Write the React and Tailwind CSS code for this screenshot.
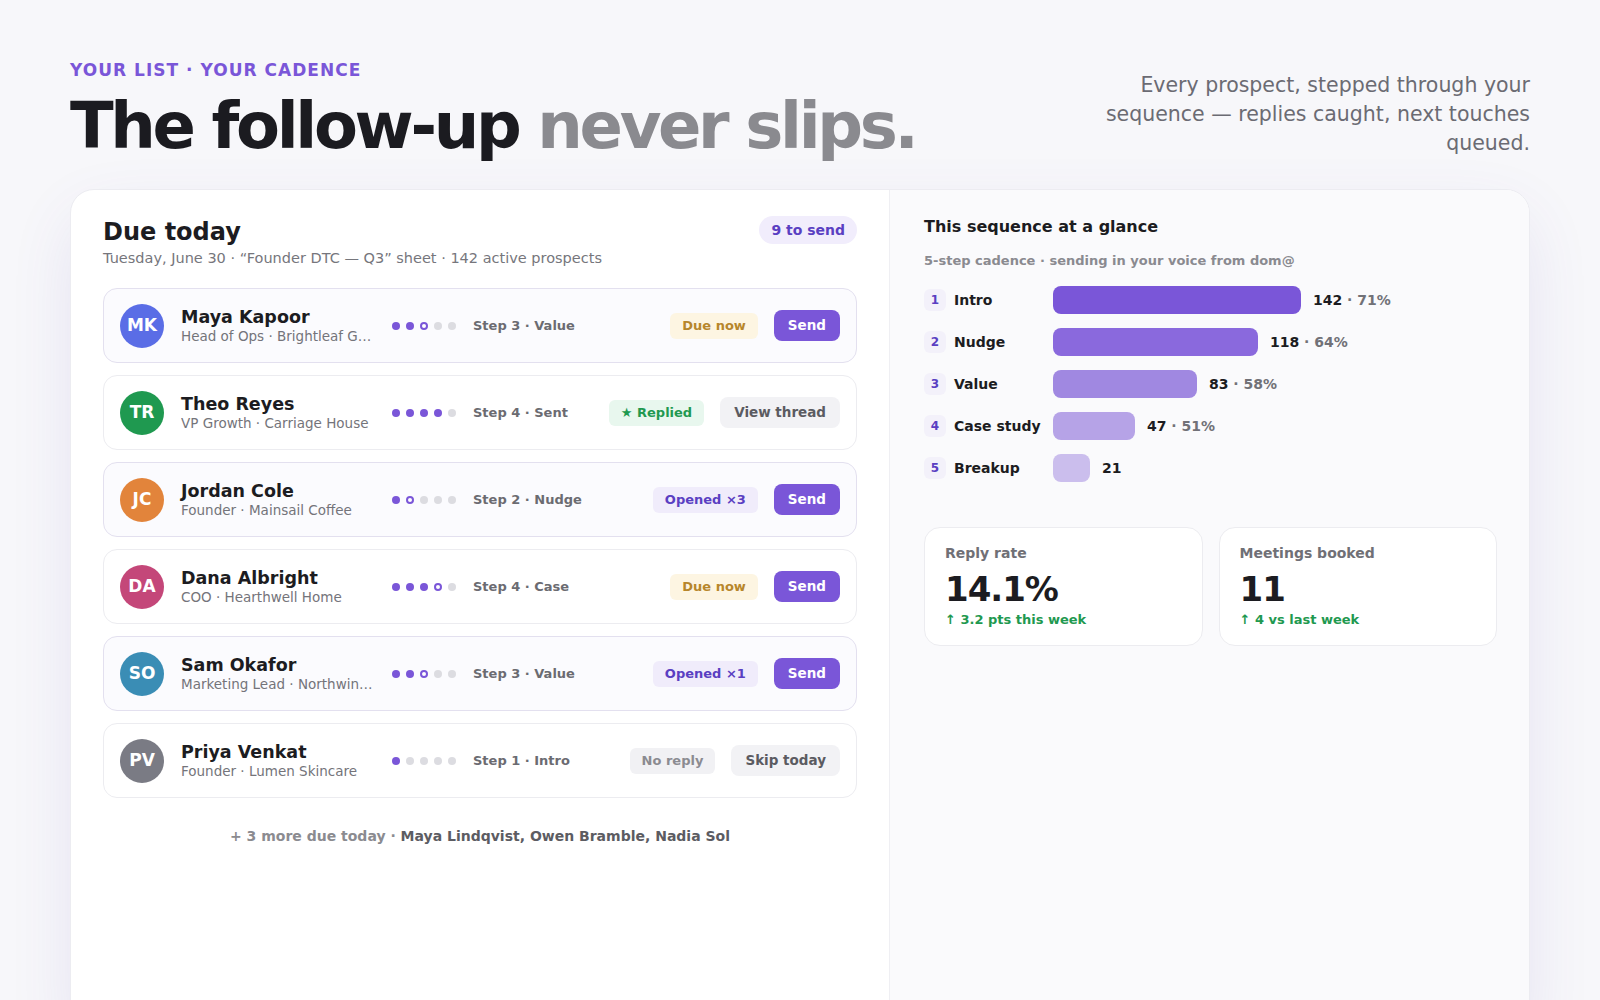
import React from "react";

const rows = [
  {
    initials: "MK",
    avatar: "bg-[#5a6de6]",
    name: "Maya Kapoor",
    sub: "Head of Ops · Brightleaf Goods",
    dots: ["f", "f", "h", "e", "e"],
    step: "Step 3 · Value",
    badge: "Due now",
    badgeCls: "bg-[#fdf5e2] text-[#b7862b]",
    action: "Send",
    primary: true,
    hl: true,
  },
  {
    initials: "TR",
    avatar: "bg-[#1f9950]",
    name: "Theo Reyes",
    sub: "VP Growth · Carriage House",
    dots: ["f", "f", "f", "f", "e"],
    step: "Step 4 · Sent",
    badge: "★ Replied",
    badgeCls: "bg-[#e8f7ee] text-[#1f9950]",
    action: "View thread",
    primary: false,
    hl: false,
  },
  {
    initials: "JC",
    avatar: "bg-[#e2843b]",
    name: "Jordan Cole",
    sub: "Founder · Mainsail Coffee",
    dots: ["f", "h", "e", "e", "e"],
    step: "Step 2 · Nudge",
    badge: "Opened ×3",
    badgeCls: "bg-[#f0ecfb] text-[#5a3fc2]",
    action: "Send",
    primary: true,
    hl: true,
  },
  {
    initials: "DA",
    avatar: "bg-[#c44779]",
    name: "Dana Albright",
    sub: "COO · Hearthwell Home",
    dots: ["f", "f", "f", "h", "e"],
    step: "Step 4 · Case",
    badge: "Due now",
    badgeCls: "bg-[#fdf5e2] text-[#b7862b]",
    action: "Send",
    primary: true,
    hl: false,
  },
  {
    initials: "SO",
    avatar: "bg-[#3a8db5]",
    name: "Sam Okafor",
    sub: "Marketing Lead · Northwind Supply",
    dots: ["f", "f", "h", "e", "e"],
    step: "Step 3 · Value",
    badge: "Opened ×1",
    badgeCls: "bg-[#f0ecfb] text-[#5a3fc2]",
    action: "Send",
    primary: true,
    hl: true,
  },
  {
    initials: "PV",
    avatar: "bg-[#7a7b84]",
    name: "Priya Venkat",
    sub: "Founder · Lumen Skincare",
    dots: ["f", "e", "e", "e", "e"],
    step: "Step 1 · Intro",
    badge: "No reply",
    badgeCls: "bg-[#f1f1f4] text-[#8b8b91]",
    action: "Skip today",
    primary: false,
    hl: false,
  },
];

const steps = [
  { n: 1, label: "Intro", bar: "w-[248px] bg-[#7a56d8]", count: "142", pct: "71%" },
  { n: 2, label: "Nudge", bar: "w-[205px] bg-[#8a69dd]", count: "118", pct: "64%" },
  { n: 3, label: "Value", bar: "w-[144px] bg-[#a088e1]", count: "83", pct: "58%" },
  { n: 4, label: "Case study", bar: "w-[82px] bg-[#b6a3e7]", count: "47", pct: "51%" },
  { n: 5, label: "Breakup", bar: "w-[37px] bg-[#cbbeed]", count: "21", pct: null },
];

function Dot({ kind }) {
  if (kind === "f") return <span className="w-2 h-2 rounded-full bg-[#7a56d8]" />;
  if (kind === "h")
    return <span className="w-2 h-2 rounded-full border-2 border-[#7a56d8] bg-white" />;
  return <span className="w-2 h-2 rounded-full bg-[#dcdce1]" />;
}

function ProspectRow({ r }) {
  return (
    <div
      className={`flex items-center h-[75px] px-4 rounded-[14px] border ${
        r.hl ? "bg-[#fbfbfe] border-[#e3e0ef]" : "bg-white border-[#ececf0]"
      }`}
    >
      <div
        className={`w-11 h-11 rounded-full flex items-center justify-center text-white font-bold text-[17px] shrink-0 ${r.avatar}`}
      >
        {r.initials}
      </div>
      <div className="ml-[17px] w-[195px] shrink-0">
        <div className="text-[17.5px] leading-[22px] font-bold text-[#1c1c21]">{r.name}</div>
        <div className="text-[13.5px] leading-[17px] text-[#74747a] whitespace-nowrap overflow-hidden text-ellipsis">
          {r.sub}
        </div>
      </div>
      <div className="ml-4 flex items-center gap-1.5">
        {r.dots.map((d, i) => (
          <Dot key={i} kind={d} />
        ))}
      </div>
      <div className="ml-[17px] text-[13px] font-bold text-[#6b6b71]">{r.step}</div>
      <div className="ml-auto flex items-center gap-4">
        <span className={`h-[26px] px-3 rounded-md flex items-center text-[13px] font-bold ${r.badgeCls}`}>
          {r.badge}
        </span>
        <button
          className={`h-[31px] px-3.5 rounded-lg text-[13.5px] font-bold ${
            r.primary ? "bg-[#7a56d8] text-white" : "bg-[#f2f2f5] text-[#5b5b61]"
          }`}
        >
          {r.action}
        </button>
      </div>
    </div>
  );
}

function StatCard({ label, value, delta }) {
  return (
    <div className="flex-1 bg-white border border-[#ececf0] rounded-2xl px-5 pt-[15px] pb-[16px]">
      <div className="text-sm leading-5 font-bold text-[#707076]">{label}</div>
      <div className="mt-[9px] text-[34px] leading-[34px] font-bold tracking-[-0.03em] text-[#1c1c21]">
        {value}
      </div>
      <div className="mt-[5px] text-[13px] leading-[18px] font-bold text-[#1f9950]">{delta}</div>
    </div>
  );
}

export default function App() {
  return (
    <div className="min-h-screen bg-[#f7f7fa] font-['DejaVu_Sans',sans-serif] px-[70px] pt-[58px] overflow-hidden">
      <div className="flex items-end justify-between">
        <div>
          <div className="text-[17px] leading-6 font-bold tracking-[0.06em] text-[#7a56d8]">
            YOUR LIST · YOUR CADENCE
          </div>
          <h1 className="mt-3 text-[64px] leading-[64px] font-bold tracking-[-0.052em] text-[#1b1b20]">
            The follow-up <span className="text-[#8a8a8f]">never slips.</span>
          </h1>
        </div>
        <p className="max-w-[440px] text-right text-[20.5px] leading-[29px] text-[#6b6b73]">
          Every prospect, stepped through your sequence — replies caught, next touches queued.
        </p>
      </div>

      <div className="mt-[31px] h-[850px] flex bg-white border border-[#ececf1] rounded-[24px] overflow-hidden shadow-[0_24px_70px_-10px_rgba(90,70,180,0.14)]">
        <div className="w-[818px] shrink-0 px-8 pt-[26px]">
          <div className="flex items-start justify-between">
            <div>
              <h2 className="text-2xl leading-8 font-bold text-[#1c1c21]">Due today</h2>
              <div className="text-[14.5px] leading-5 text-[#76767c]">
                Tuesday, June 30 · “Founder DTC — Q3” sheet · 142 active prospects
              </div>
            </div>
            <span className="h-7 px-3 rounded-full bg-[#f1edfc] text-[#5a3fc2] text-sm font-bold flex items-center">
              9 to send
            </span>
          </div>
          <div className="mt-5 flex flex-col gap-3">
            {rows.map((r) => (
              <ProspectRow key={r.initials} r={r} />
            ))}
          </div>
          <div className="mt-7 text-center text-sm leading-5 font-bold">
            <span className="text-[#8b8b90]">+ 3 more due today · </span>
            <span className="text-[#5c5c62]">Maya Lindqvist, Owen Bramble, Nadia Sol</span>
          </div>
        </div>

        <div className="flex-1 bg-[#fafafc] border-l border-[#efeff3] pl-[34px] pr-8 pt-[25px]">
          <h3 className="text-base leading-6 font-bold text-[#1c1c21]">This sequence at a glance</h3>
          <div className="mt-3 text-[13px] leading-5 font-bold text-[#8a8a90]">
            5-step cadence · sending in your voice from dom@
          </div>
          <div className="mt-[15px] flex flex-col gap-3.5">
            {steps.map((s) => (
              <div key={s.n} className="flex items-center h-7">
                <span className="w-[22px] h-[22px] rounded-md bg-[#f3f1fa] text-[#5a3fc2] text-xs font-bold flex items-center justify-center">
                  {s.n}
                </span>
                <span className="ml-2 w-[87px] whitespace-nowrap text-sm font-bold text-[#1c1c21]">
                  {s.label}
                </span>
                <span className={`ml-[12px] h-7 rounded-lg ${s.bar}`} />
                <span className="ml-3 text-sm font-bold text-[#1c1c21]">
                  {s.count}
                  {s.pct && <span className="text-[#717177]"> · {s.pct}</span>}
                </span>
              </div>
            ))}
          </div>
          <div className="mt-[45px] flex gap-4">
            <StatCard label="Reply rate" value="14.1%" delta="↑ 3.2 pts this week" />
            <StatCard label="Meetings booked" value="11" delta="↑ 4 vs last week" />
          </div>
        </div>
      </div>
    </div>
  );
}
